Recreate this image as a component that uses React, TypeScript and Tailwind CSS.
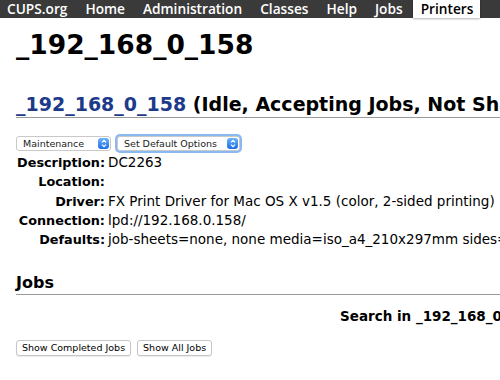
const navItems = ["CUPS.org", "Home", "Administration", "Classes", "Help", "Jobs"];

const details: [string, string][] = [
  ["Description:", "DC2263"],
  ["Location:", ""],
  ["Driver:", "FX Print Driver for Mac OS X v1.5 (color, 2-sided printing)"],
  ["Connection:", "lpd://192.168.0.158/"],
  ["Defaults:", "job-sheets=none, none media=iso_a4_210x297mm sides=two-sided-long-edge"],
];

const Stepper = () => (
  <span className="absolute right-[1px] top-[1px] bottom-[1px] w-[11px] rounded-[3px] bg-gradient-to-b from-[#6cb3fa] to-[#176ee6] flex items-center justify-center">
    <svg width="6" height="9" viewBox="0 0 6 9" fill="none" stroke="white" strokeWidth="1.2">
      <path d="M1 3.3 L3 1.3 L5 3.3" />
      <path d="M1 5.7 L3 7.7 L5 5.7" />
    </svg>
  </span>
);

const SelectBox = ({ label, width, focused }: { label: string; width: string; focused?: boolean }) => (
  <div
    className={`relative h-[15px] ${width} rounded-[3px] bg-white border border-[#c9c9c9] text-[9.5px] leading-[13px] pl-[6px] text-[#222] ${
      focused ? "ring-[2px] ring-[#8ab8f0]" : ""
    }`}
  >
    {label}
    <Stepper />
  </div>
);

const App = () => {
  return (
    <div
      className="w-[500px] h-[380px] overflow-hidden bg-white text-black"
      style={{ fontFamily: '"DejaVu Sans", "Open Sans", sans-serif' }}
    >
      <div
        className="h-[18px] bg-[#3a3a3a] flex items-stretch text-[13.7px] font-semibold text-white leading-[17px] whitespace-nowrap"
        style={{ fontFamily: '"Open Sans", "DejaVu Sans", sans-serif' }}
      >
        <div className="flex pl-[7px] gap-[18px]">
          {navItems.map((n) => (
            <span key={n}>{n}</span>
          ))}
        </div>
        <div className="ml-[10px] bg-white text-black px-[8px] w-[67px] shadow-[0_1px_2px_rgba(0,0,0,0.3)]">
          Printers
        </div>
      </div>

      <div className="px-[16px] whitespace-nowrap">
        <h1 className="mt-[9px] text-[26.5px] font-bold leading-[36px]">_192_168_0_158</h1>

        <h2 className="mt-[29px] text-[19px] font-bold leading-[24px] border-b border-[#9a9a9a] pb-[1px] mr-[-16px]">
          <span className="text-[#1d3a8a]">_192_168_0_158</span> (Idle, Accepting Jobs, Not Shared)
        </h2>

        <div className="mt-[18px] flex gap-[6px]">
          <SelectBox label="Maintenance" width="w-[95px]" />
          <SelectBox label="Set Default Options" width="w-[123px]" focused />
        </div>

        <div className="mt-[2px] grid grid-cols-[89px_1fr] gap-x-[3px] text-[13.5px] leading-[19.3px]">
          {details.map(([k, v]) => (
            <div key={k} className="contents">
              <span className="text-right font-bold text-[12.8px]">{k}</span>
              <span>{v}</span>
            </div>
          ))}
        </div>

        <h2 className="mt-[24px] text-[16px] font-bold leading-[20px] border-b border-[#9a9a9a] pb-[1px] mr-[-16px]">
          Jobs
        </h2>

        <div className="mt-[12px] pl-[324px] text-[13.5px] font-bold leading-[18px]">
          Search in _192_168_0_158:
        </div>

        <div className="mt-[15px] flex gap-[6px] text-[9.5px] leading-[14px]">
          <button className="h-[16px] px-[5px] rounded-[3px] border border-[#c6c6c6] bg-white shadow-[0_1px_1px_rgba(0,0,0,0.08)]">
            Show Completed Jobs
          </button>
          <button className="h-[16px] px-[5px] rounded-[3px] border border-[#c6c6c6] bg-white shadow-[0_1px_1px_rgba(0,0,0,0.08)]">
            Show All Jobs
          </button>
        </div>
      </div>
    </div>
  );
};

export default App;
